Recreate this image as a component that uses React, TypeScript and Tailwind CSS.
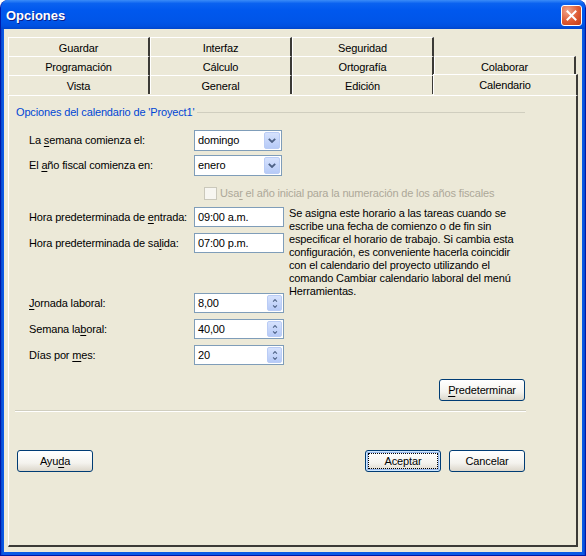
import React from 'react';

function U({ children }: { children: React.ReactNode }) {
  return <span className="underline underline-offset-[2px]">{children}</span>;
}

function Tab({ label }: { label: string }) {
  return (
    <div className="flex h-[19px] w-[142px] shrink-0 items-center justify-center border-l border-t border-r-[2px] border-l-white border-t-white border-r-[#3b3a36] pt-[2px]">
      {label}
    </div>
  );
}

function Chevron({ up = false, small = false }: { up?: boolean; small?: boolean }) {
  return (
    <svg width={small ? 6 : 8} height={small ? 3 : 5} viewBox="0 0 8 5" className={up ? 'rotate-180' : ''}>
      <path d="M0.8 0.8 L4 4 L7.2 0.8" fill="none" stroke="#4D6185" strokeWidth="1.8" />
    </svg>
  );
}

function Combo({ value }: { value: string }) {
  return (
    <div className="flex h-[21px] w-[88px] items-center border border-[#7F9DB9] bg-white">
      <span className="flex-1 pl-[3px]">{value}</span>
      <span className="mr-[1px] flex h-[17px] w-[16px] items-center justify-center rounded-[2px] border border-[#BACCF5] bg-[linear-gradient(to_bottom,#D6E2FD,#B6CAF7)]">
        <Chevron />
      </span>
    </div>
  );
}

function TextBox({ value }: { value: string }) {
  return (
    <div className="flex h-[20px] w-[90px] items-center border border-[#7F9DB9] bg-white pl-[3px]">{value}</div>
  );
}

function Spinner({ value }: { value: string }) {
  return (
    <div className="flex h-[20px] w-[90px] items-center border border-[#7F9DB9] bg-white">
      <span className="flex-1 pl-[3px]">{value}</span>
      <span className="mr-[1px] flex h-[16px] w-[15px] flex-col items-center justify-center gap-[3px] rounded-[2px] border border-[#BACCF5] bg-[linear-gradient(to_bottom,#D6E2FD,#B6CAF7)]">
        <Chevron up small />
        <Chevron small />
      </span>
    </div>
  );
}

function Row({ label, children, className = '' }: { label: React.ReactNode; children: React.ReactNode; className?: string }) {
  return (
    <div className={`flex items-center ${className}`}>
      <span className="w-[165px] shrink-0">{label}</span>
      {children}
    </div>
  );
}

function Button({ children, width = 'w-[76px]', focused = false }: { children: React.ReactNode; width?: string; focused?: boolean }) {
  return (
    <button
      className={`flex h-[22px] ${width} items-center justify-center rounded-[3px] border border-[#003C74] bg-[linear-gradient(to_bottom,#FFFFFF,#F4F3EE_60%,#DCD7CB)] p-[2px] ${
        focused ? 'shadow-[inset_0_0_0_1px_#CEE7FF,inset_0_0_0_2px_#98B8EA]' : ''
      }`}
    >
      <span className={`flex h-full w-full items-center justify-center ${focused ? 'outline outline-1 outline-dotted outline-black -outline-offset-1' : ''}`}>
        {children}
      </span>
    </button>
  );
}

export default function App() {
  return (
    <div className="h-[556px] w-[586px] bg-white font-['Liberation_Sans',Arial,sans-serif] text-[11px] leading-[13px] tracking-[-0.15px] text-black">
      <div className="flex h-full flex-col overflow-hidden rounded-t-[8px] border-x border-b border-[#0019A8] bg-[linear-gradient(to_right,#0844C9,#0A5AE6_2px,#0A5AE6_calc(100%-2px),#0844C9)]">
        {/* title bar */}
        <div className="flex h-[29px] shrink-0 items-center justify-between bg-[linear-gradient(to_bottom,#3A8CF8_0%,#0A62F0_12%,#0058EE_35%,#0055E8_75%,#0050E0_90%,#0045CC_100%)] pl-[5px] pr-[3px]">
          <span className="pt-[2px] text-[13px] font-bold tracking-normal text-white [text-shadow:1px_1px_0_#0A1E8A]">Opciones</span>
          <span className="mt-[2px] flex h-[21px] w-[21px] items-center justify-center rounded-[3px] border border-white bg-[radial-gradient(circle_at_30%_25%,#F0A58C,#DE5A32_55%,#C23A15)]">
            <svg width="11" height="11" viewBox="0 0 11 11">
              <path d="M1.5 1.5 L9.5 9.5 M9.5 1.5 L1.5 9.5" stroke="white" strokeWidth="2" strokeLinecap="square" />
            </svg>
          </span>
        </div>

        {/* client */}
        <div className="mx-[3px] mb-[3px] flex flex-1 flex-col bg-[#ECE9D8] px-[4px] pb-[5px] pt-[8px]">
          {/* tabs */}
          <div className="flex flex-col">
            <div className="flex">
              <Tab label="Guardar" />
              <Tab label="Interfaz" />
              <Tab label="Seguridad" />
            </div>
            <div className="flex">
              <Tab label="Programación" />
              <Tab label="Cálculo" />
              <Tab label="Ortografía" />
              <Tab label="Colaborar" />
            </div>
            <div className="flex items-start">
              <Tab label="Vista" />
              <Tab label="General" />
              <Tab label="Edición" />
              <div className="relative z-10 -ml-[1px] -mt-[1px] flex h-[21px] w-[145px] items-start justify-center border-l border-t border-r-[2px] border-l-white border-t-white border-r-[#3b3a36] bg-[#ECE9D8] pt-[4px]">
                Calendario
              </div>
            </div>
          </div>

          {/* panel */}
          <div className="flex flex-1 flex-col border-l border-t border-b-[2px] border-r-[2px] border-l-white border-t-white border-b-[#3b3a36] border-r-[#3b3a36]">
            <div className="ml-[7px] mr-[51px] mt-[10px] flex items-center">
              <span className="text-[#0046D5]">Opciones del calendario de 'Proyect1'</span>
              <span className="ml-[3px] h-px flex-1 bg-[#D0CEBF]" />
            </div>

            <div className="ml-[20px] flex flex-col">
              <Row label={<>La <U>s</U>emana comienza el:</>} className="mt-[11px]">
                <Combo value="domingo" />
              </Row>
              <Row label={<>El <U>a</U>ño fiscal comienza en:</>} className="mt-[4px]">
                <Combo value="enero" />
              </Row>
              <div className="mt-[11px] flex items-center pl-[175px] text-[#ACA899]">
                <span className="h-[13px] w-[13px] border border-[#CAC8BB] bg-[#F7F6F1]" />
                <span className="ml-[3px]">
                  Usa<U>r</U> el año inicial para la numeración de los años fiscales
                </span>
              </div>

              <div className="mt-[7px] flex">
                <div className="flex flex-col">
                  <Row label={<>Hora predeterminada de <U>e</U>ntrada:</>}>
                    <TextBox value="09:00 a.m." />
                  </Row>
                  <Row label={<>Hora predeterminada de sa<U>l</U>ida:</>} className="mt-[6px]">
                    <TextBox value="07:00 p.m." />
                  </Row>
                  <Row label={<><U>J</U>ornada laboral:</>} className="mt-[40px]">
                    <Spinner value="8,00" />
                  </Row>
                  <Row label={<>Semana la<U>b</U>oral:</>} className="mt-[6px]">
                    <Spinner value="40,00" />
                  </Row>
                  <Row label={<>Días por <U>m</U>es:</>} className="mt-[6px]">
                    <Spinner value="20" />
                  </Row>
                </div>
                <div className="ml-[5px] flex flex-col whitespace-nowrap">
                  <span>Se asigna este horario a las tareas cuando se</span>
                  <span>escribe una fecha de comienzo o de fin sin</span>
                  <span>especificar el horario de trabajo. Si cambia esta</span>
                  <span>configuración, es conveniente hacerla coincidir</span>
                  <span>con el calendario del proyecto utilizando el</span>
                  <span>comando Cambiar calendario laboral del menú</span>
                  <span>Herramientas.</span>
                </div>
              </div>
            </div>

            <div className="mr-[51px] mt-[14px] flex justify-end">
              <Button width="w-[86px]">
                <U>P</U>redeterminar
              </Button>
            </div>

            <div className="ml-[6px] mr-[50px] mt-[9px] h-[2px] border-t border-b border-t-[#D0CEBF] border-b-white" />

            <div className="ml-[8px] mr-[51px] mt-[38px] flex items-center">
              <Button>
                Ayu<U>d</U>a
              </Button>
              <div className="flex-1" />
              <Button width="w-[76px]" focused>
                Aceptar
              </Button>
              <div className="w-[8px]" />
              <Button width="w-[76px]">Cancelar</Button>
            </div>
          </div>
        </div>
      </div>
    </div>
  );
}
